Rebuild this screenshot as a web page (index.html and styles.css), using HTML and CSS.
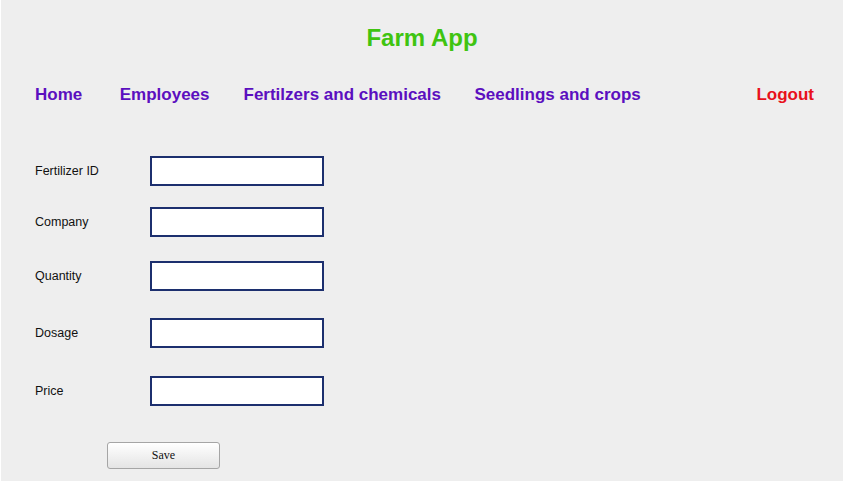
FILE: index.html
```html
<!DOCTYPE html>
<html>
<head>
<meta charset="utf-8">
<title>Farm App</title>
<link rel="stylesheet" href="styles.css">
</head>
<body>
<div class="page">
  <h1 class="title">Farm App</h1>
  <nav class="nav">
    <a class="nav-link home" href="#">Home</a>
    <a class="nav-link" href="#">Employees</a>
    <a class="nav-link fert" href="#">Fertilzers and chemicals</a>
    <a class="nav-link" href="#">Seedlings and crops</a>
    <a class="nav-link logout" href="#">Logout</a>
  </nav>
  <form class="form">
    <div class="fields">
      <div class="row"><label class="label">Fertilizer ID</label><input class="input" type="text"></div>
      <div class="row"><label class="label">Company</label><input class="input" type="text"></div>
      <div class="row"><label class="label">Quantity</label><input class="input" type="text"></div>
      <div class="row"><label class="label">Dosage</label><input class="input" type="text"></div>
      <div class="row"><label class="label">Price</label><input class="input" type="text"></div>
    </div>
    <button class="save" type="button">Save</button>
  </form>
</div>
</body>
</html>
```
FILE: styles.css
```css
html, body {
  margin: 0;
  padding: 0;
  background: #ffffff;
}
.page {
  margin-left: 1px;
  width: 842px;
  height: 481px;
  background: #eeeeee;
  font-family: "Liberation Sans", Arial, sans-serif;
  overflow: hidden;
}
.title {
  margin: 0;
  padding-top: 24px;
  font-size: 24px;
  line-height: 28px;
  font-weight: bold;
  color: #3fc411;
  text-align: center;
}
.nav {
  display: flex;
  align-items: center;
  gap: 34px;
  margin-top: 33px;
  padding: 0 29px 0 34px;
}
.nav-link {
  font-size: 17px;
  line-height: 20px;
  font-weight: bold;
  color: #5b0fbf;
  text-decoration: none;
}
.home {
  margin-right: 3.5px;
}
.fert {
  margin-right: -0.5px;
}
.logout {
  margin-left: auto;
  color: #e8111b;
}
.form {
  padding-top: 51px;
  padding-left: 34px;
}
.fields {
  display: grid;
  grid-template-rows: 51px 54px 57px 58px 30px;
  align-items: start;
}
.row {
  display: flex;
  align-items: center;
}
.label {
  width: 115px;
  font-size: 12.5px;
  color: #111111;
}
.input {
  box-sizing: border-box;
  width: 174px;
  height: 30px;
  margin: 0;
  border: 2px solid #1c2f6e;
  background: #ffffff;
  padding: 2px 4px;
}
.save {
  display: block;
  box-sizing: border-box;
  margin-top: 36px;
  margin-left: 72px;
  width: 113px;
  height: 27px;
  border: 1px solid #a5a5a5;
  border-radius: 3px;
  background: linear-gradient(#ffffff, #e4e4e4);
  font-family: "Liberation Serif", "Times New Roman", serif;
  font-size: 12px;
  color: #111111;
  padding: 0;
}
```
